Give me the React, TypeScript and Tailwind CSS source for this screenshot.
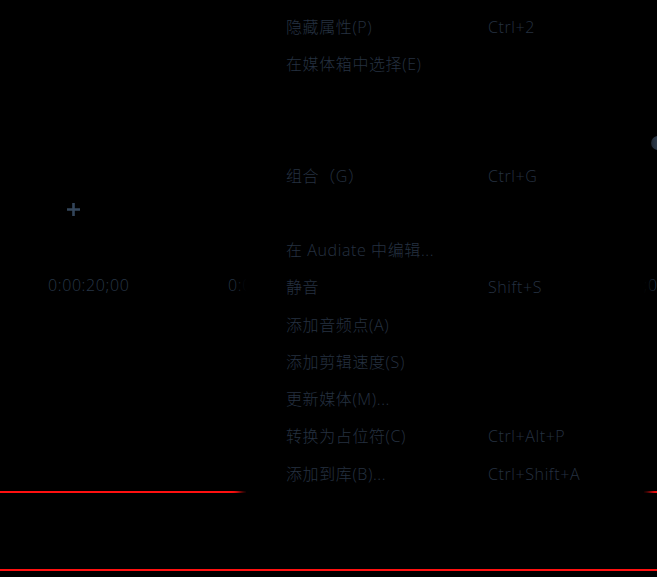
import React from "react";

const items: { label: string; shortcut?: string }[] = [
  { label: "隐藏属性(P)", shortcut: "Ctrl+2" },
  { label: "在媒体箱中选择(E)" },
  { label: "" },
  { label: "" },
  { label: "组合（G）", shortcut: "Ctrl+G" },
  { label: "" },
  { label: "在 Audiate 中编辑..." },
  { label: "静音", shortcut: "Shift+S" },
  { label: "添加音频点(A)" },
  { label: "添加剪辑速度(S)" },
  { label: "更新媒体(M)..." },
  { label: "转换为占位符(C)", shortcut: "Ctrl+Alt+P" },
  { label: "添加到库(B)...", shortcut: "Ctrl+Shift+A" },
];

export default function App() {
  return (
    <div
      className="relative w-[657px] h-[577px] overflow-hidden bg-black text-[16px]"
      style={{ fontFamily: '"Open Sans", "Noto Sans CJK SC", sans-serif' }}
    >
      {/* timeline background */}
      <div className="flex flex-col h-full">
        <div className="h-[203px]" />
        <div className="flex pl-[67px] h-[13px] items-center">
          <svg width="13" height="13" viewBox="0 0 13 13">
            <path d="M6.5 0v13M0 6.5h13" stroke="#33455a" strokeWidth="2.6" />
          </svg>
        </div>
        <div className="h-[59px]" />
        <div className="flex h-[20px] items-center text-[#273647] text-[16px] font-light tracking-[0.6px] leading-none whitespace-nowrap">
          <span className="ml-[48px] w-[180px]">0:00:20;00</span>
          <span className="w-[18px] overflow-hidden">0:00:30;00</span>
          <span className="w-[397px]" />
          <span className="w-[14px] overflow-hidden">
            <span className="inline-block ml-[-57px]">0:00:40;00</span>
          </span>
        </div>
        <div className="h-[196px]" />
        <div className="h-[2px] bg-[#ff1010]" />
        <div className="h-[76px]" />
        <div className="h-[2px] bg-[#ff1010]" />
      </div>

      {/* knob at right edge */}
      <div className="absolute left-[651px] top-[136px] w-[14px] h-[14px] rounded-full bg-[#2e3b4b]" />

      {/* context menu */}
      <div className="absolute left-[246px] top-[-12px] w-[398px] pt-[20px] pb-[10px] bg-black shadow-[0_0_8px_6px_#000]">
        {items.map((it, i) => (
          <div key={i} className="flex items-center h-[37.25px] pl-[40px] text-[#253140] font-light tracking-[0.6px] leading-none whitespace-nowrap">
            <span className="w-[202px]">{it.label}</span>
            <span>{it.shortcut ?? ""}</span>
          </div>
        ))}
      </div>
    </div>
  );
}
